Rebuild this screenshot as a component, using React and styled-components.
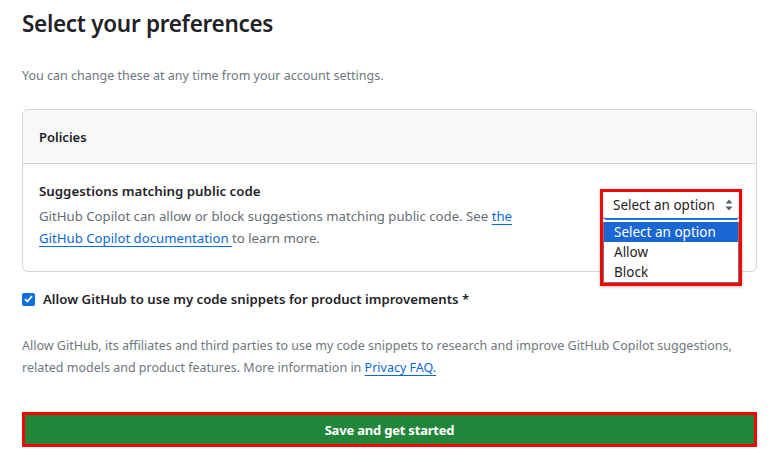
import styled, { createGlobalStyle } from "styled-components";

const GlobalStyle = createGlobalStyle`
  body {
    margin: 0;
    background: #ffffff;
    font-family: "Noto Sans", "Open Sans", "Liberation Sans", sans-serif;
    color: #1f2328;
  }
`;

const Page = styled.div`
  width: 771px;
  height: 462px;
  padding: 6px 14px 0 22px;
  box-sizing: border-box;
  overflow: hidden;
`;

const Title = styled.h1`
  margin: 0;
  font-size: 22.5px;
  font-weight: 600;
  line-height: 36px;
  letter-spacing: -0.3px;
`;

const Subtitle = styled.p`
  margin: 24px 0 0;
  font-size: 12.5px;
  line-height: 20px;
  color: #6e7781;
`;

const Box = styled.section`
  margin-top: 23px;
  border: 1px solid #d0d7de;
  border-radius: 6px;
`;

const BoxHeader = styled.div`
  height: 53px;
  display: flex;
  align-items: center;
  padding: 0 16px;
  background: #f6f8fa;
  border-bottom: 1px solid #d0d7de;
  border-radius: 6px 6px 0 0;
  font-size: 13px;
  font-weight: 600;
`;

const BoxBody = styled.div`
  display: flex;
  justify-content: space-between;
  align-items: flex-start;
  padding: 17px 16px 22px;
`;

const Setting = styled.div`
  width: 490px;
`;

const SettingTitle = styled.div`
  font-size: 13.3px;
  font-weight: 600;
  line-height: 20px;
`;

const SettingText = styled.p`
  margin: 4px 0 0;
  font-size: 13.2px;
  line-height: 22px;
  color: #656d76;
`;

const Link = styled.a`
  color: #0969da;
  text-decoration: underline;
  text-underline-offset: 3px;
`;

const SelectAnchor = styled.div`
  position: relative;
  width: 138px;
  height: 30px;
  margin-top: 10px;
`;

const Highlight = styled.div`
  position: absolute;
  top: -2px;
  left: -2px;
  width: 136px;
  border: 3px solid #ff0000;
  background: #ffffff;
  box-shadow: 0 1px 3px rgba(0, 0, 0, 0.25);
  z-index: 2;
`;

const SelectBox = styled.div`
  height: 26px;
  display: flex;
  align-items: center;
  justify-content: space-between;
  padding: 0 6px 0 10px;
  border-bottom: 2px solid #1f6feb;
  border-radius: 0 0 4px 4px;
  font-size: 13.5px;
  color: #1f2328;
`;

const Arrows = styled.svg`
  width: 8px;
  height: 12px;
  fill: #57606a;
`;

const OptionList = styled.ul`
  list-style: none;
  margin: 2px 0 0;
  padding: 0;
  border: 1px solid #767676;
  border-top: none;
`;

const Option = styled.li`
  height: 20px;
  line-height: 20px;
  padding: 0 10px;
  font-size: 13.5px;
  background: ${(p) => (p.$active ? "#1a66d2" : "#ffffff")};
  color: ${(p) => (p.$active ? "#ffffff" : "#1f2328")};
`;

const CheckRow = styled.label`
  display: flex;
  align-items: center;
  gap: 8px;
  margin-top: 17px;
  font-size: 13.2px;
  font-weight: 600;
  line-height: 20px;
`;

const CheckBox = styled.span`
  width: 13px;
  height: 13px;
  border-radius: 2px;
  background: #0b6fe3;
  display: flex;
  align-items: center;
  justify-content: center;
`;

const Fineprint = styled.p`
  margin: 26px 0 0;
  font-size: 12.5px;
  line-height: 22px;
  color: #6e7781;
`;

const SaveButton = styled.button`
  display: block;
  width: 100%;
  height: 35px;
  margin-top: 33px;
  background: #22863a;
  border: 3px solid #ff0000;
  color: #ffffff;
  font-family: "Noto Sans", "Open Sans", sans-serif;
  font-size: 13px;
  font-weight: 700;
  letter-spacing: -0.2px;
  cursor: pointer;
`;

export default function App() {
  return (
    <>
      <GlobalStyle />
      <Page>
        <Title>Select your preferences</Title>
        <Subtitle>You can change these at any time from your account settings.</Subtitle>
        <Box>
          <BoxHeader>Policies</BoxHeader>
          <BoxBody>
            <Setting>
              <SettingTitle>Suggestions matching public code</SettingTitle>
              <SettingText>
                GitHub Copilot can allow or block suggestions matching public code. See{" "}
                <Link href="#">the GitHub Copilot documentation </Link>to learn more.
              </SettingText>
            </Setting>
            <SelectAnchor>
              <Highlight>
                <SelectBox>
                  Select an option
                  <Arrows viewBox="0 0 8 12">
                    <path d="M4 0.5 L7.5 4.5 H0.5 Z M4 11.5 L0.5 7.5 H7.5 Z" />
                  </Arrows>
                </SelectBox>
                <OptionList>
                  <Option $active>Select an option</Option>
                  <Option>Allow</Option>
                  <Option>Block</Option>
                </OptionList>
              </Highlight>
            </SelectAnchor>
          </BoxBody>
        </Box>
        <CheckRow>
          <CheckBox>
            <svg width="9" height="8" viewBox="0 0 9 8">
              <path d="M1 4.2 L3.4 6.5 L8 1.2" stroke="#fff" strokeWidth="1.8" fill="none" />
            </svg>
          </CheckBox>
          Allow GitHub to use my code snippets for product improvements *
        </CheckRow>
        <Fineprint>
          Allow GitHub, its affiliates and third parties to use my code snippets to research and improve GitHub
          Copilot suggestions, related models and product features. More information in{" "}
          <Link href="#">Privacy FAQ.</Link>
        </Fineprint>
        <SaveButton>Save and get started</SaveButton>
      </Page>
    </>
  );
}
